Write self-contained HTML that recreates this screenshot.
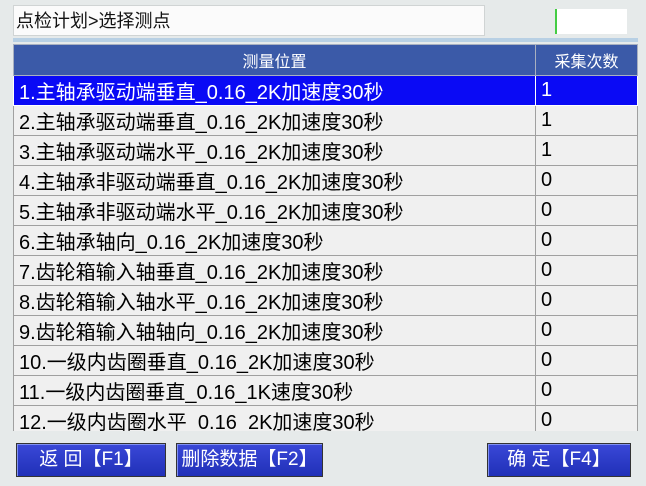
<!DOCTYPE html>
<html><head><meta charset="utf-8"><style>
body{margin:0;width:646px;height:486px;background:#e6eaea;position:relative;overflow:hidden;font-family:"Liberation Sans","Noto Sans CJK SC",sans-serif;}
.t{position:absolute;left:13px;top:5px;width:472px;height:31px;background:#fbfbfb;border:1px solid #d0d4d4;box-sizing:border-box;font-size:18px;line-height:31px;padding-left:2px;color:#111}
.s{position:absolute;left:555px;top:9px;width:72px;height:25px;background:#fff;border-left:2px solid #4c4;box-sizing:border-box}
.bl{position:absolute;left:13px;top:38px;width:625px;height:4px;background:#b8d0e4}
.tb{position:absolute;left:13px;top:44px;width:625px;height:387px;overflow:hidden;background:#f0f0f0}
table{border-collapse:collapse;width:625px;font-size:20px;table-layout:fixed}
th{background:#3b5aa8;color:#fff;font-weight:normal;height:30px;font-size:16px;border:1px solid #a8b0c0;padding:0}
td{height:29px;border:1px solid #a0a0a0;padding:0 0 0 5px;color:#000;background:#f0f0f0;white-space:nowrap;overflow:hidden}
tr.sel td{background:#0a0af5;color:#fff;border-color:#fff}
.b{position:absolute;top:443px;height:34px;background:linear-gradient(#3a48d8,#2030b8);border:1px solid #333;box-sizing:border-box;color:#fff;font-size:19px;line-height:32px;text-align:center;box-shadow:inset 1px 1px 0 #8090f0}
</style></head><body>
<div class="t">点检计划&gt;选择测点</div>
<div class="s"></div>
<div class="bl"></div>
<div class="tb"><table>
<tr><th style="width:521px">测量位置</th><th>采集次数</th></tr>
<tr class="sel"><td>1.主轴承驱动端垂直_0.16_2K加速度30秒</td><td>1</td></tr>
<tr><td>2.主轴承驱动端垂直_0.16_2K加速度30秒</td><td>1</td></tr>
<tr><td>3.主轴承驱动端水平_0.16_2K加速度30秒</td><td>1</td></tr>
<tr><td>4.主轴承非驱动端垂直_0.16_2K加速度30秒</td><td>0</td></tr>
<tr><td>5.主轴承非驱动端水平_0.16_2K加速度30秒</td><td>0</td></tr>
<tr><td>6.主轴承轴向_0.16_2K加速度30秒</td><td>0</td></tr>
<tr><td>7.齿轮箱输入轴垂直_0.16_2K加速度30秒</td><td>0</td></tr>
<tr><td>8.齿轮箱输入轴水平_0.16_2K加速度30秒</td><td>0</td></tr>
<tr><td>9.齿轮箱输入轴轴向_0.16_2K加速度30秒</td><td>0</td></tr>
<tr><td>10.一级内齿圈垂直_0.16_2K加速度30秒</td><td>0</td></tr>
<tr><td>11.一级内齿圈垂直_0.16_1K速度30秒</td><td>0</td></tr>
<tr><td>12.一级内齿圈水平_0.16_2K加速度30秒</td><td>0</td></tr>
</table></div>
<div class="b" style="left:16px;width:150px">返 回【F1】</div>
<div class="b" style="left:176px;width:147px">删除数据【F2】</div>
<div class="b" style="left:487px;width:144px">确 定【F4】</div>
</body></html>
